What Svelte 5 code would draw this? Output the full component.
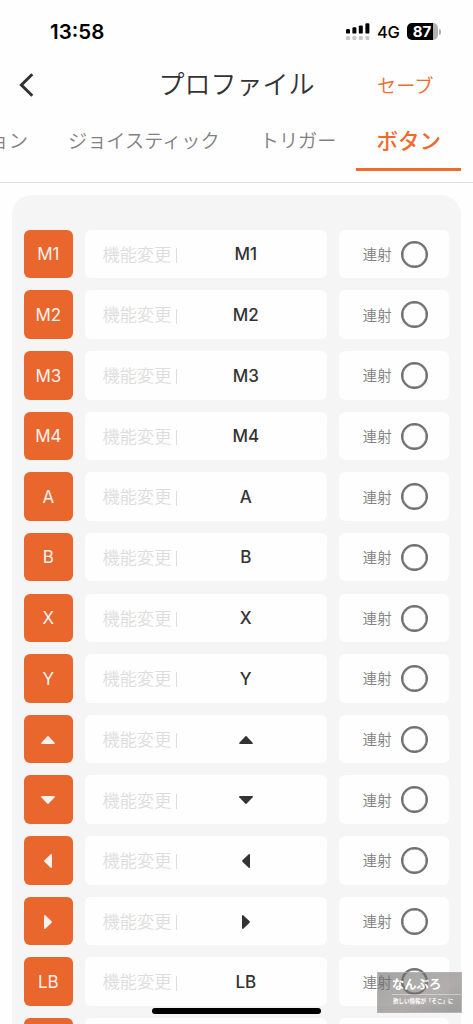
<script lang="ts">
  interface Key {
    name: string;
    dir?: number;
  }

  const keys: Key[] = [
    { name: 'M1' },
    { name: 'M2' },
    { name: 'M3' },
    { name: 'M4' },
    { name: 'A' },
    { name: 'B' },
    { name: 'X' },
    { name: 'Y' },
    { name: 'up', dir: 0 },
    { name: 'down', dir: 180 },
    { name: 'left', dir: 270 },
    { name: 'right', dir: 90 },
    { name: 'LB' },
  ];

  const tabs = ['ション', 'ジョイスティック', 'トリガー', 'ボタン'];

  let active = $state('ボタン');
  let turbo: Record<string, boolean> = $state({});
</script>

{#snippet label(key: Key)}
  {#if key.dir === undefined}
    {key.name}
  {:else}
    <svg class="arrow" viewBox="0 0 16 16" aria-label={key.name}>
      <path transform="rotate({key.dir} 8 8)" d="M7.2 4.4Q8 3.7 8.8 4.4L14.7 10.7Q15.4 11.8 14.2 12H1.8Q.6 11.8 1.3 10.7Z" />
    </svg>
  {/if}
{/snippet}

<div class="screen">
  <div class="status">
    <span class="time">13:58</span>
    <svg class="signal" viewBox="0 0 25 18">
      <rect x="0" y="6" width="4" height="4.6" rx="1.2" />
      <rect x="6.4" y="4.3" width="4" height="6.3" rx="1.2" />
      <rect x="12.8" y="2.4" width="4" height="8.2" rx="1.2" />
      <rect x="19.4" y=".2" width="4" height="10.4" rx="1.2" />
      <g fill="#c8c8c8">
        <rect x="0" y="13" width="4" height="4" rx="1.2" />
        <rect x="6.4" y="13" width="4" height="4" rx="1.2" />
        <rect x="12.8" y="13" width="4" height="4" rx="1.2" />
        <rect x="19.4" y="13" width="4" height="4" rx="1.2" />
      </g>
    </svg>
    <span class="network">4G</span>
    <div class="battery"><span>87</span></div>
    <i class="cap"></i>
  </div>

  <header>
    <button class="back" aria-label="戻る">
      <svg viewBox="0 0 16 26"><path d="M13.3 2.3L2.4 13L13.3 23.7" /></svg>
    </button>
    <h1>プロファイル</h1>
    <button class="save">セーブ</button>
  </header>

  <nav>
    {#each tabs as tab}
      <button class="tab" class:active={tab === active} onclick={() => (active = tab)}>{tab}</button>
    {/each}
  </nav>

  <main>
    {#each keys as key}
      <div class="row">
        <div class="key">{@render label(key)}</div>
        <div class="map">
          <span class="hint">機能変更</span>
          <i class="bar"></i>
          <span class="value">{@render label(key)}</span>
        </div>
        <button class="turbo" onclick={() => (turbo[key.name] = !turbo[key.name])}>
          <span>連射</span>
          <i class="ring" class:on={turbo[key.name]}></i>
        </button>
      </div>
    {/each}
    <div class="row">
      <div class="key"></div>
      <div class="map"></div>
      <div class="turbo"></div>
    </div>
  </main>

  <div class="home"></div>
  <div class="stamp">
    <b>なんぶろ</b>
    <small>欲しい情報が「そこ」に</small>
  </div>
</div>

<style>
  :global(body) {
    margin: 0;
    overflow: hidden;
  }

  .screen {
    position: relative;
    width: 473px;
    height: 1024px;
    overflow: hidden;
    background: #fefefe;
    color: #333333;
    font-family: Inter, "Noto Sans CJK JP", sans-serif;
  }

  .screen * {
    box-sizing: border-box;
  }

  button {
    padding: 0;
    border: 0;
    background: none;
    color: inherit;
    font: inherit;
    white-space: nowrap;
  }

  svg {
    display: block;
  }

  .status {
    display: flex;
    align-items: center;
    height: 63px;
    padding: 0 32px 0 50px;
    color: #000000;
  }

  .time {
    font-size: 20.5px;
    font-weight: 600;
  }

  .signal {
    width: 25px;
    height: 18px;
    margin-left: auto;
  }

  .network {
    width: 25px;
    margin-left: 6px;
    font-size: 16.5px;
    font-weight: 500;
    letter-spacing: -.3px;
  }

  .battery {
    width: 31px;
    height: 17px;
    margin-left: 5px;
    padding-right: 1px;
    border-radius: 5px;
    background: linear-gradient(90deg, #000000 26px, #b3b3b3 26px);
    color: #ffffff;
    font-size: 15px;
    font-weight: 700;
    line-height: 17px;
    text-align: center;
  }

  .cap {
    width: 2px;
    height: 6px;
    margin-left: 1px;
    border-radius: 0 3px 3px 0;
    background: #b3b3b3;
  }

  header {
    display: grid;
    grid-template-columns: 100px 1fr 100px;
    align-items: center;
    height: 44px;
  }

  .back svg {
    width: 16px;
    height: 26px;
    margin-left: 19px;
    fill: none;
    stroke: #333333;
    stroke-width: 3;
  }

  h1 {
    margin: 0;
    font-size: 26px;
    font-weight: 350;
    line-height: 44px;
    text-align: center;
  }

  .save {
    justify-self: start;
    margin-left: 4px;
    color: #f06a2c;
    font-size: 19.2px;
    font-weight: 350;
  }

  nav {
    display: flex;
    justify-content: flex-end;
    height: 76px;
    padding-right: 12px;
    border-bottom: 1px solid #dddddd;
  }

  .tab {
    flex: none;
    height: 64px;
    padding: 2px 20px 0;
    color: #808080;
    font-size: 19.2px;
    font-weight: 350;
  }

  .tab.active {
    padding: 4px 20px 0;
    border-bottom: 3px solid #f06a2c;
    color: #f06a2c;
    font-size: 21.5px;
    font-weight: 500;
  }

  main {
    display: flex;
    flex-direction: column;
    gap: 12.05px;
    height: 900px;
    margin: 12px 12px 0;
    padding: 34.7px 12px 0;
    border-radius: 20px;
    background: #f5f5f5;
  }

  .row {
    display: grid;
    flex: none;
    grid-template-columns: 48.7px 242.6px 109.6px;
    gap: 12.1px;
    height: 48.6px;
  }

  .key,
  .map,
  .turbo {
    display: flex;
    align-items: center;
    border-radius: 6px;
    background: #fefefe;
  }

  .key {
    justify-content: center;
    padding-top: .6px;
    background: #e9662c;
    color: #f7f2ef;
    font-size: 17px;
    font-weight: 400;
  }

  .arrow {
    width: 16px;
    height: 16px;
    margin-top: .6px;
    fill: currentColor;
  }

  .map {
    padding-left: 17.8px;
  }

  .hint {
    width: 73.2px;
    margin-top: -1.4px;
    color: #dddddd;
    font-size: 17.2px;
    font-weight: 350;
    white-space: nowrap;
  }

  .bar {
    width: 1.5px;
    height: 15px;
    margin-top: 3px;
    background: #dddddd;
  }

  .value {
    display: flex;
    justify-content: center;
    width: 137px;
    padding-top: .6px;
    font-size: 17px;
    font-weight: 500;
  }

  .turbo {
    padding-left: 23.3px;
    color: #808080;
    font-size: 14.4px;
    font-weight: 350;
  }

  .turbo span {
    width: 38px;
    margin-top: -1px;
    text-align: left;
  }

  .ring {
    width: 27px;
    height: 27px;
    margin-top: .4px;
    border: 2.5px solid #707070;
    border-radius: 50%;
    box-shadow: inset 0 0 0 .5px #707070;
  }

  .ring.on {
    background: #e9662c;
  }

  .home {
    position: absolute;
    bottom: 10px;
    left: 152px;
    width: 169px;
    height: 6px;
    border-radius: 3px;
    background: #000000;
  }

  .stamp {
    position: absolute;
    right: 11px;
    bottom: 11px;
    width: 85px;
    height: 41px;
    padding-left: 14px;
    border: 1px solid rgba(190, 190, 190, .6);
    background: linear-gradient(155deg, rgba(105, 105, 105, .6), rgba(118, 112, 110, .56) 60%, rgba(100, 100, 100, .6));
    color: #ffffff;
  }

  .stamp b {
    display: block;
    height: 22px;
    border-bottom: 1px solid rgba(255, 255, 255, .4);
    font-size: 12.3px;
    line-height: 23px;
  }

  .stamp small {
    display: block;
    padding-left: 1px;
    font-size: 5.5px;
    font-weight: 700;
    line-height: 12px;
    white-space: nowrap;
  }
</style>
